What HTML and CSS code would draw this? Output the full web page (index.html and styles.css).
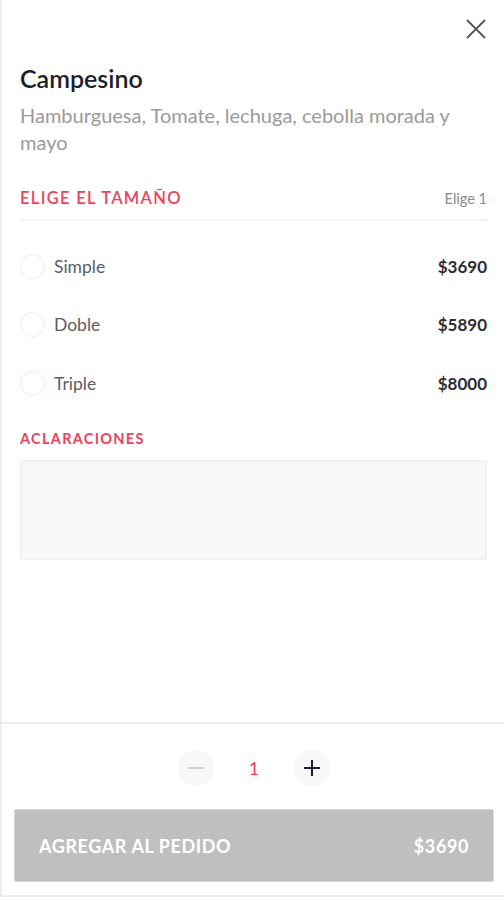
FILE: index.html
```html
<!DOCTYPE html>
<html lang="es">
<head>
<meta charset="utf-8">
<title>Campesino</title>
<link rel="stylesheet" href="styles.css">
</head>
<body>
<div class="modal">
  <div class="content">
    <div class="close-row">
      <button class="close" aria-label="Cerrar">
        <svg width="22" height="22" viewBox="0 0 22 22"><path d="M2 2 L20 20 M20 2 L2 20" stroke="#555" stroke-width="1.8" fill="none"/></svg>
      </button>
    </div>
    <h1 class="title">Campesino</h1>
    <p class="desc">Hamburguesa, Tomate, lechuga, cebolla morada y mayo</p>

    <div class="section-head">
      <span class="section-title">ELIGE EL TAMAÑO</span>
      <span class="section-hint">Elige 1</span>
    </div>

    <div class="options">
      <label class="option"><span class="radio"></span><span class="opt-name">Simple</span><span class="opt-price">$3690</span></label>
      <label class="option"><span class="radio"></span><span class="opt-name">Doble</span><span class="opt-price">$5890</span></label>
      <label class="option"><span class="radio"></span><span class="opt-name">Triple</span><span class="opt-price">$8000</span></label>
    </div>

    <div class="notes-title">ACLARACIONES</div>
    <div class="notes"></div>
  </div>

  <div class="footer">
    <div class="stepper">
      <button class="step minus" aria-label="Menos"><span class="bar"></span></button>
      <span class="qty">1</span>
      <button class="step plus" aria-label="Más">
        <svg width="18" height="18" viewBox="0 0 18 18"><path d="M9 1 V17 M1 9 H17" stroke="#1d2233" stroke-width="2" fill="none"/></svg>
      </button>
    </div>
    <button class="add">
      <span>AGREGAR AL PEDIDO</span>
      <span>$3690</span>
    </button>
  </div>
</div>
</body>
</html>
```

FILE: styles.css
```css
* { box-sizing: border-box; }
html, body { margin: 0; padding: 0; background: #fff; }
body { font-family: Lato, "Open Sans", Arial, sans-serif; }

.modal {
  width: 504px;
  height: 897px;
  border-left: 2px solid #ececec;
  border-bottom: 2px solid #ececec;
  display: flex;
  flex-direction: column;
}

.content {
  flex: 1;
  padding: 0 17px 0 18px;
}

.close-row {
  display: flex;
  justify-content: flex-end;
  padding-top: 18px;
  height: 58px;
}
.close {
  width: 22px; height: 22px;
  padding: 0; border: 0; background: none;
}

.title {
  margin: 6px 0 0;
  font-size: 25px;
  font-weight: 600;
  color: #1e1e28;
  line-height: 28px;
}
.desc {
  margin: 10px 0 0;
  font-size: 20px;
  color: #9a9a9a;
  line-height: 27px;
}

.section-head {
  margin-top: 32px;
  display: flex;
  justify-content: space-between;
  align-items: center;
  padding-bottom: 11px;
  border-bottom: 2px solid #f3f3f3;
}
.section-title {
  color: #f2415b;
  font-size: 16.5px;
  letter-spacing: 1.3px;
  font-weight: 600;
}
.section-hint {
  color: #8a8a8a;
  font-size: 14.5px;
}

.options { padding-top: 16px; }
.option {
  display: flex;
  align-items: center;
  height: 58.5px;
}
.radio {
  width: 25px; height: 25px;
  border: 1px solid #ececec;
  border-radius: 50%;
  margin-right: 9px;
}
.opt-name {
  flex: 1;
  font-size: 17.5px;
  color: #5a5e66;
}
.opt-price {
  font-size: 17px;
  font-weight: 700;
  color: #2d2d33;
}

.notes-title {
  margin-top: 17px;
  color: #f2415b;
  font-size: 14.5px;
  font-weight: 700;
  letter-spacing: 1.3px;
}
.notes {
  margin-top: 13px;
  height: 100px;
  background: #f8f8f8;
  border: 2px solid #f1f1f1;
}

.footer {
  border-top: 2px solid #eeeeee;
  padding: 0 10px 13px 12px;
}
.stepper {
  display: flex;
  justify-content: center;
  align-items: center;
  padding: 26px 0 23px;
}
.step {
  width: 36px; height: 36px;
  border-radius: 50%;
  border: 0;
  background: #f7f7f7;
  display: flex;
  align-items: center;
  justify-content: center;
  padding: 0;
}
.bar { display: block; width: 16px; height: 2px; background: #cfcfcf; }
.qty {
  width: 80px;
  text-align: center;
  color: #f2415b;
  font-size: 18px;
}
.add {
  width: 100%;
  height: 73px;
  background: #bfbfbf;
  border: 1px solid #d8d8d8;
  border-radius: 2px;
  display: flex;
  justify-content: space-between;
  align-items: center;
  padding: 0 24px;
  color: #fff;
  font-family: Lato, Arial, sans-serif;
  font-size: 18px;
  font-weight: 700;
  letter-spacing: 0.6px;
}
```
